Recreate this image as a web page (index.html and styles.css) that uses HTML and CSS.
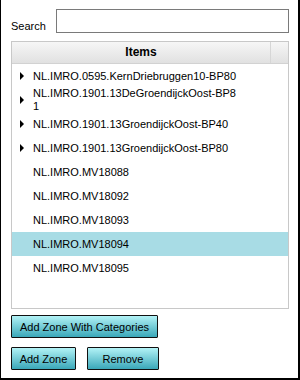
FILE: index.html
```html
<!DOCTYPE html>
<html lang="en">
<head>
    <meta charset="UTF-8">
    <title>Zones</title>
    <link rel="stylesheet" href="styles.css">
</head>
<body>
    <div class="panel">
        <div class="search-row">
            <label class="search-label" for="search">Search</label>
            <input class="search-input" type="text" id="search">
        </div>

        <div class="grid">
            <div class="grid-head">
                <div class="head-title">Items</div>
                <div class="head-scroll"></div>
            </div>
            <div class="grid-body">
                <div class="row"><span class="expander arrow"></span><span class="cell">NL.IMRO.0595.KernDriebruggen10-BP80</span></div>
                <div class="row"><span class="expander arrow"></span><span class="cell">NL.IMRO.1901.13DeGroendijckOost-BP81</span></div>
                <div class="row"><span class="expander arrow"></span><span class="cell">NL.IMRO.1901.13GroendijckOost-BP40</span></div>
                <div class="row"><span class="expander arrow"></span><span class="cell">NL.IMRO.1901.13GroendijckOost-BP80</span></div>
                <div class="row"><span class="expander"></span><span class="cell">NL.IMRO.MV18088</span></div>
                <div class="row"><span class="expander"></span><span class="cell">NL.IMRO.MV18092</span></div>
                <div class="row"><span class="expander"></span><span class="cell">NL.IMRO.MV18093</span></div>
                <div class="row selected"><span class="expander"></span><span class="cell">NL.IMRO.MV18094</span></div>
                <div class="row"><span class="expander"></span><span class="cell">NL.IMRO.MV18095</span></div>
            </div>
        </div>

        <div class="actions first">
            <button class="btn btn-wide">Add Zone With Categories</button>
        </div>
        <div class="actions second">
            <button class="btn btn-add">Add Zone</button>
            <button class="btn btn-remove">Remove</button>
        </div>
    </div>
</body>
</html>
```

FILE: styles.css
```css
body {
    margin: 0;
    font-family: "Liberation Sans", Arial, sans-serif;
    font-size: 11px;
    color: #000;
}
.panel {
    width: 300px;
    height: 380px;
    box-sizing: border-box;
    border-left: 1px solid #000;
    border-right: 2px solid #000;
    border-bottom: 2px solid #000;
    padding: 9px 9px 0 10px;
    display: flex;
    flex-direction: column;
    background: #fff;
}
.search-row {
    display: flex;
    align-items: flex-end;
}
.search-label {
    width: 45px;
    line-height: 13px;
}
.search-input {
    width: 233px;
    height: 24px;
    box-sizing: border-box;
    margin: 0;
    padding: 2px 4px;
    border: 1px solid #7a7a7a;
    font: inherit;
}
.grid {
    margin-top: 8px;
    height: 268px;
    box-sizing: border-box;
    border: 1px solid #c8c8c8;
    display: flex;
    flex-direction: column;
}
.grid-head {
    display: flex;
    height: 22px;
    box-sizing: border-box;
    border-bottom: 1px solid #d2d2d2;
    background: linear-gradient(#f6f6f6, #e1e1e1);
}
.head-title {
    flex: 1;
    text-align: center;
    font-weight: bold;
    font-size: 12px;
    line-height: 21px;
}
.head-scroll {
    width: 18px;
    box-sizing: border-box;
    border-left: 1px solid #d6d6d6;
}
.row {
    display: flex;
    align-items: center;
    height: 24px;
    line-height: 13px;
}
.row.selected {
    background: #a8dce5;
}
.expander {
    flex: none;
    width: 21px;
    padding-left: 8px;
    box-sizing: border-box;
    display: flex;
    align-items: center;
}
.expander.arrow::before {
    content: "";
    border-left: 4px solid #000;
    border-top: 4px solid transparent;
    border-bottom: 4px solid transparent;
}
.cell {
    width: 206px;
    word-break: break-all;
}
.actions {
    display: flex;
}
.actions.first {
    margin-top: 6px;
}
.actions.second {
    margin-top: 9px;
}
.btn {
    height: 23px;
    box-sizing: border-box;
    margin: 0;
    padding: 0 6px;
    border: 1px solid #111;
    border-radius: 1px;
    background: linear-gradient(#b2f2f6, #3aa8b9);
    font: 11px "Liberation Sans", Arial, sans-serif;
    color: #000;
}
.btn-wide {
    width: 147px;
}
.btn-add {
    width: 65px;
}
.btn-remove {
    width: 72px;
    margin-left: 11px;
}
```
